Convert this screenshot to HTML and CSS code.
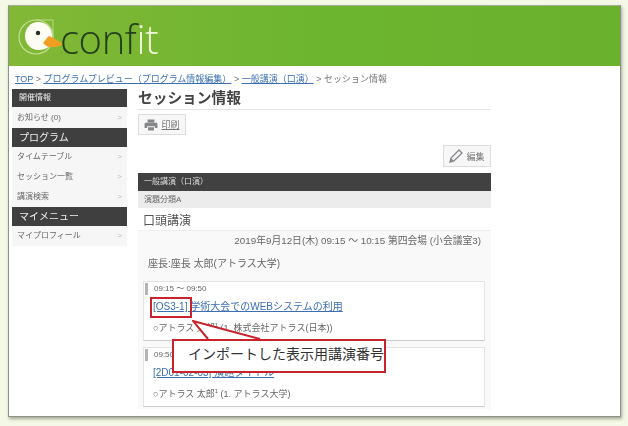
FILE: index.html
```html
<!DOCTYPE html>
<html lang="ja">
<head>
<meta charset="utf-8">
<title>セッション情報</title>
<link rel="stylesheet" href="styles.css">
</head>
<body>
<div class="window">
  <header class="header">
    <svg class="duck" width="56" height="50" viewBox="0 0 56 50">
      <path d="M18 5 L35 5 L35 22" fill="none" stroke="#bcd98a" stroke-width="1"/>
      <circle cx="18" cy="22" r="17" fill="none" stroke="#c6de98" stroke-width="1.200"/>
      <path d="M20 7 C28 7 34 13 34 21 L34 27 C32 32 27 35 21 35 C13 35 7 29 7 21 C7 13 13 7 20 7Z" fill="#fdfdf4"/>
      <circle cx="20" cy="18" r="2.200" fill="#2b2b22"/>
      <path d="M25 28 C27 26 29 22 31 21 C36 23 41 26 45 29 C42 32 36 32.500 32 32 C29 32 27 30 25 28Z" fill="#f0a020"/>
    </svg>
    <div class="wordmark">conf<span class="wordmark-light">it</span></div>
  </header>
  <nav class="crumbs"><a href="#">TOP</a> &gt; <a href="#">プログラムプレビュー（プログラム情報編集）</a> &gt; <a href="#">一般講演（口演）</a> &gt; セッション情報</nav>
  <div class="columns">
    <aside class="side">
      <h3 class="side-head small">開催情報</h3>
      <div class="side-item first">お知らせ (0)<i class="chev">&gt;</i></div>
      <h3 class="side-head">プログラム</h3>
      <div class="side-item">タイムテーブル<i class="chev">&gt;</i></div>
      <div class="side-item">セッション一覧<i class="chev">&gt;</i></div>
      <div class="side-item">講演検索<i class="chev">&gt;</i></div>
      <h3 class="side-head">マイメニュー</h3>
      <div class="side-item">マイプロフィール<i class="chev">&gt;</i></div>
    </aside>
    <main class="main">
      <h1 class="title">セッション情報</h1>
      <div class="tool print">
        <svg width="14" height="12" viewBox="0 0 16 14"><path d="M4 0.500H12V4H4Z M1.500 4.500H14.500Q15.500 4.500 15.500 5.500V10.500H12.500V8.500H3.500V10.500H0.500V5.500Q0.500 4.500 1.500 4.500Z M4.500 9.500H11.500V13.500H4.500Z" fill="#85878a"/></svg>
        <span class="tool-link">印刷</span>
      </div>
      <div class="edit-row">
        <div class="tool edit">
          <svg width="14" height="14" viewBox="0 0 14 14"><path d="M1 13 L2 9 L10 1 L13 4 L5 12 Z" fill="none" stroke="#85878a" stroke-width="1.300"/><path d="M1 13 L2 9 L5 12Z" fill="#85878a"/></svg>
          <span>編集</span>
        </div>
      </div>
      <div class="bar">一般講演（口演）</div>
      <div class="subbar">演題分類A</div>
      <h2 class="session-name">口頭講演</h2>
      <div class="session-body">
        <p class="when">2019年9月12日(木) 09:15 ～ 10:15 第四会場 (小会議室3)</p>
        <p class="chair">座長:座長 太郎(アトラス大学)</p>
        <article class="card">
          <div class="time">09:15 ～ 09:50</div>
          <a class="talk" href="#">[OS3-1] 学術大会でのWEBシステムの利用</a>
          <div class="authors">○アトラス 太郎<sup>1</sup> (1. 株式会社アトラス(日本))</div>
        </article>
        <article class="card">
          <div class="time">09:50 ～ 10:15</div>
          <a class="talk" href="#">[2D01-02-03] 演題タイトル</a>
          <div class="authors">○アトラス 太郎<sup>1</sup> (1. アトラス大学)</div>
        </article>
      </div>
    </main>
  </div>
  <div class="mark"></div>
  <svg class="tail" width="72" height="22" viewBox="0 0 72 22"><path d="M1 1 L68 19 L68 22 L16 22 L16 19 Z" fill="#fff"/><path d="M16 19 L1 1 L68 19" fill="none" stroke="#c8232c" stroke-width="2"/></svg>
  <div class="callout">インポートした表示用講演番号</div>
</div>
</body>
</html>
```
FILE: styles.css
```css
* { box-sizing: border-box; }
html, body { margin: 0; height: 100%; }
body {
  background: #f4f8e6;
  font-family: "Liberation Sans", "Noto Sans CJK JP", sans-serif;
  color: #555;
  padding: 5px 7px 9px 8px;
  overflow: hidden;
}
.window {
  position: relative;
  width: 613px;
  height: 412px;
  background: #fff;
  border: 1px solid #8e9289;
  border-top-color: #a8ad98;
  box-shadow: 1px 2px 3px rgba(60, 70, 50, .45);
  filter: blur(.45px);
}
.header {
  height: 60px;
  background: linear-gradient(90deg, #82b836 0%, #6cb52f 50%, #6ab22d 100%);
  display: flex;
  align-items: flex-start;
  padding: 9px 0 0 9px;
}
.duck { flex: none; }
.wordmark {
  font-family: "Open Sans", "Liberation Sans", sans-serif;
  font-weight: 300;
  font-size: 40px;
  line-height: 40px;
  color: #24401a;
  margin: 4px 0 0 -14px;
  letter-spacing: -.4px;
}
.wordmark-light { color: #f0f7d8; }
.crumbs {
  font-size: 9px;
  line-height: 12px;
  padding: 7px 0 0 6px;
  height: 23px;
  color: #777;
  white-space: nowrap;
}
.crumbs a { color: #3b6fb0; }
.columns { display: flex; align-items: flex-start; padding-left: 3px; }
.side { width: 115px; flex: none; }
.side-head {
  margin: 0;
  height: 19px;
  background: #3f3f3f;
  color: #eee;
  font-size: 10px;
  font-weight: normal;
  line-height: 19px;
  padding-left: 7px;
}
.side-head.small { font-size: 8px; height: 18px; line-height: 18px; }
.side-item {
  height: 20px;
  background: #f6f6f6;
  font-size: 8px;
  line-height: 20px;
  color: #666;
  padding: 0 5px;
  display: flex;
  justify-content: space-between;
}
.side-item.first { height: 21px; line-height: 21px; }
.chev { font-style: normal; color: #bbb; }
.main { width: 353px; margin-left: 11px; }
.title {
  margin: 0;
  height: 21px;
  border-bottom: 1px solid #e4e4e4;
  font-size: 14.700px;
  line-height: 19px;
  font-weight: bold;
  color: #444;
}
.tool {
  width: 48px;
  height: 22px;
  background: #f7f7f7;
  border: 1px solid #ddd;
  display: flex;
  align-items: center;
  justify-content: center;
  gap: 3px;
  font-size: 9px;
  color: #777;
}
.print { margin-top: 4px; height: 21px; }
.tool-link { text-decoration: underline; }
.edit-row { display: flex; justify-content: flex-end; margin-top: 10px; }
.bar {
  margin-top: 6px;
  height: 18px;
  background: #414141;
  color: #ddd;
  font-size: 8px;
  line-height: 18px;
  padding-left: 6px;
}
.subbar {
  height: 17px;
  background: #ececec;
  font-size: 8px;
  line-height: 17px;
  color: #666;
  padding-left: 6px;
}
.session-name {
  margin: 0;
  height: 23px;
  border-bottom: 1px solid #eee;
  font-size: 12px;
  font-weight: normal;
  line-height: 26px;
  color: #555;
  padding-left: 5px;
}
.session-body { background: #f9f9f9; height: 178px; padding: 0 6px 0 5px; }
.when {
  margin: 0;
  font-size: 9.800px;
  line-height: 14px;
  padding: 3px 4px 0 0;
  text-align: right;
  color: #666;
}
.chair {
  margin: 0;
  font-size: 10px;
  line-height: 14px;
  padding-top: 9px;
  height: 33px;
  padding-left: 5px;
  color: #666;
}
.card {
  height: 60px;
  margin-bottom: 6px;
  background: #fff;
  border: 1px solid #e4e4e4;
  border-bottom: 1px solid #ccc;
  padding: 0 0 0 1px;
  position: relative;
}
.time {
  font-size: 8px;
  line-height: 12px;
  margin-top: 1px;
  padding-left: 6px;
  border-left: 3px solid #b4b4b4;
  color: #666;
}
.talk {
  display: block;
  margin: 6px 0 0 8px;
  font-size: 10px;
  line-height: 12px;
  color: #3b6fb0;
}
.authors {
  margin: 9px 0 0 8px;
  font-size: 9px;
  line-height: 12px;
  color: #666;
}
.authors sup { font-size: 6px; line-height: 0; }
.mark {
  position: absolute;
  left: 141px;
  top: 291px;
  width: 42px;
  height: 21px;
  border: 2px solid #c8232c;
}
.tail { position: absolute; left: 183px; top: 314px; }
.callout {
  position: absolute;
  left: 163px;
  top: 333px;
  width: 214px;
  height: 34px;
  background: #fff;
  border: 2px solid #c8232c;
  font-size: 14px;
  line-height: 27px;
  color: #333;
  padding-left: 14px;
  white-space: nowrap;
}
```
